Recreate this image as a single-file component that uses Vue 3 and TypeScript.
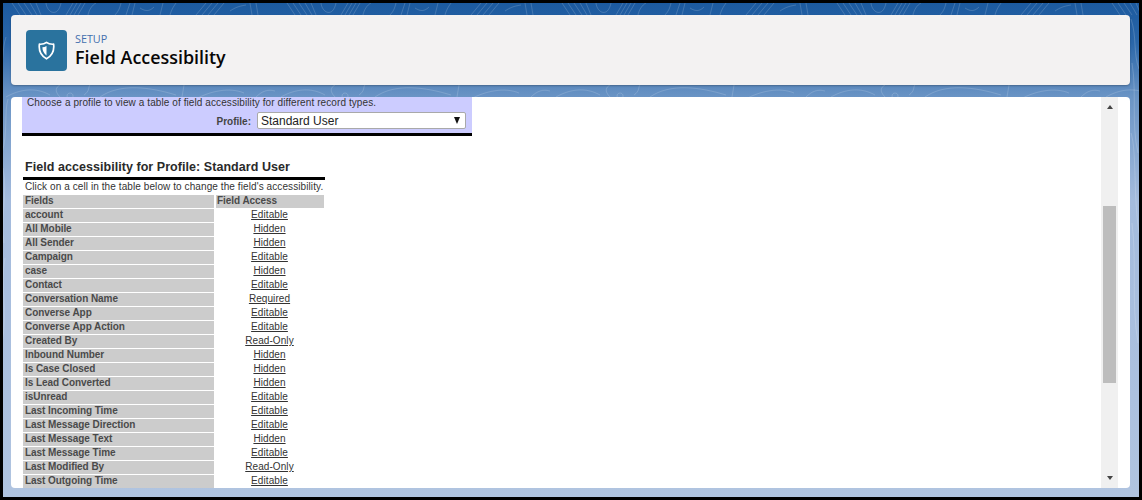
<script setup lang="ts">
type Row = { name: string; access: string };
const rows: Row[] = [
  { name: "account", access: "Editable" },
  { name: "All Mobile", access: "Hidden" },
  { name: "All Sender", access: "Hidden" },
  { name: "Campaign", access: "Editable" },
  { name: "case", access: "Hidden" },
  { name: "Contact", access: "Editable" },
  { name: "Conversation Name", access: "Required" },
  { name: "Converse App", access: "Editable" },
  { name: "Converse App Action", access: "Editable" },
  { name: "Created By", access: "Read-Only" },
  { name: "Inbound Number", access: "Hidden" },
  { name: "Is Case Closed", access: "Hidden" },
  { name: "Is Lead Converted", access: "Hidden" },
  { name: "isUnread", access: "Editable" },
  { name: "Last Incoming Time", access: "Editable" },
  { name: "Last Message Direction", access: "Editable" },
  { name: "Last Message Text", access: "Hidden" },
  { name: "Last Message Time", access: "Editable" },
  { name: "Last Modified By", access: "Read-Only" },
  { name: "Last Outgoing Time", access: "Editable" },
];
</script>

<template>
  <div class="frame">
    <div class="desk">
      <svg class="topo" width="1136" height="494" aria-hidden="true">
        <defs>
          <pattern id="topo-lines" x="-3" y="0" width="275" height="494" patternUnits="userSpaceOnUse">
            <g fill="none" stroke="#ffffff" stroke-opacity="0.2" stroke-width="0.8">
              <path d="M12 0L20 12M18 0L26 12M24 0L32 12M30 0L37 12M36 0L41 12" />
              <path d="M46 0C47 10 58 15 61 0M66 12L73 0M70 12L77 0M74 12L81 0M78 12L85 0M88 12C89 7 92 2 96 0" />
              <path d="M115 12C119 8 120 4 121 0M126 12L130 0M132 12L135 0M140 5C146 9 150 8 154 4M160 12L163 0M170 12C171 8 173 4 176 0" />
              <path d="M196 12L206 0M202 12L212 0M208 12L218 0M214 12L224 0M230 8C236 4 240 3 246 2M252 12L250 0M258 12L256 0" />
              <path d="M6 94C20 86 36 84 50 92M60 94C54 88 56 84 60 82M70 90a3 3 0 1 0 .1 0M84 92C90 88 88 84 90 82M100 94C120 80 150 84 176 92M182 94L184 82M196 96C210 88 230 84 244 90M256 94C262 88 268 86 275 88" />
              <path d="M0 68C4 58 2 46 6 34M2 150C8 130 4 110 8 96M4 240C0 215 8 190 3 165M2 340C8 310 0 280 5 255" />
            </g>
          </pattern>
        </defs>
        <rect width="1136" height="494" fill="url(#topo-lines)" />
        <g fill="none" stroke="#ffffff" stroke-opacity="0.22" stroke-width="0.8">
          <path d="M1128 16C1134 34 1130 50 1136 66M1129 60C1134 90 1128 120 1135 150M1128 130C1134 150 1130 190 1136 230M1129 220C1134 260 1128 300 1135 340" />
        </g>
      </svg>

      <header class="head">
        <div class="badge">
          <svg width="17" height="19" viewBox="0 0 17 19">
            <path d="M8.5 1.4 C10 2.6 12.6 3.4 15.6 3.2 C16.4 9.4 14 14.8 8.5 17.8 C3 14.8 .6 9.4 1.4 3.2 C4.4 3.4 7 2.6 8.5 1.4 Z" fill="none" stroke="#fff" stroke-width="1.7" stroke-linejoin="round" />
            <path d="M8.5 5 C7.2 5.8 5.8 6.2 4.4 6.2 C4.4 9.6 5.8 12.4 8.5 14.4 Z" fill="#fff" />
          </svg>
        </div>
        <div class="titles">
          <div class="eyebrow">SETUP</div>
          <h1 class="title">Field Accessibility</h1>
        </div>
      </header>

      <main class="card">
        <div class="content">
          <section class="chooser">
            <p class="hint">Choose a profile to view a table of field accessibility for different record types.</p>
            <div class="pick">
              <span class="pick-label">Profile:</span>
              <div class="select">
                <span>Standard User</span>
                <span class="caret"></span>
              </div>
            </div>
          </section>

          <section class="result">
            <h2 class="result-title">Field accessibility for Profile: Standard User</h2>
            <p class="result-hint">Click on a cell in the table below to change the field's accessibility.</p>
            <div class="grid">
              <div class="cell th">Fields</div>
              <div class="cell th second">Field Access</div>
              <template v-for="r in rows" :key="r.name">
                <div class="cell th">{{ r.name }}</div>
                <div class="cell access"><a>{{ r.access }}</a></div>
              </template>
            </div>
          </section>
        </div>

        <div class="scrollbar">
          <span class="arrow up"></span>
          <div class="track"><div class="thumb"></div></div>
          <span class="arrow down"></span>
        </div>
      </main>
    </div>
  </div>
</template>

<style>
html, body { margin: 0; background: #000; }
</style>

<style scoped>
.frame {
  width: 1142px;
  height: 500px;
  box-sizing: border-box;
  padding: 3px;
  background: #000;
  font-family: "Liberation Sans", Arial, sans-serif;
}
.desk {
  position: relative;
  height: 494px;
  box-sizing: border-box;
  padding: 12px 9px 9px 8px;
  display: flex;
  flex-direction: column;
  gap: 12px;
  overflow: hidden;
  background: linear-gradient(180deg, #1c5a9f 0%, #2a66a8 8%, #6a94c5 19%, #a4bbdd 40%, #b0c4e0 100%);
}
.topo { position: absolute; inset: 0; }
.head {
  position: relative;
  height: 70px;
  flex: none;
  box-sizing: border-box;
  padding: 15px;
  display: flex;
  align-items: center;
  gap: 8px;
  background: #f3f2f2;
  border-radius: 4px;
  box-shadow: 0 1px 2px rgba(0, 0, 0, 0.25);
}
.badge {
  width: 41px;
  height: 41px;
  border-radius: 4px;
  background: #2a739e;
  display: flex;
  align-items: center;
  justify-content: center;
}
.titles { display: flex; flex-direction: column; padding-top: 1px; }
.eyebrow {
  font-family: "Open Sans", sans-serif;
  font-size: 10.8px;
  line-height: 14px;
  color: #4470ae;
}
.title {
  margin: -1px 0 0;
  font-family: "Open Sans", sans-serif;
  font-size: 17.9px;
  line-height: 24px;
  font-weight: 600;
  color: #080707;
}
.card {
  position: relative;
  flex: 1;
  min-height: 0;
  display: flex;
  justify-content: space-between;
  background: #fff;
  border-radius: 4px;
  overflow: hidden;
  padding-right: 12px;
}
.content { padding-left: 11px; overflow: hidden; }
.chooser {
  width: 450px;
  height: 36px;
  background: #ccccff;
  border-bottom: 3px solid #000;
}
.hint {
  margin: 0 0 0 5px;
  font-size: 10px;
  line-height: 11px;
  letter-spacing: 0.09px;
  color: #333;
}
.pick {
  margin-top: 4px;
  display: flex;
  align-items: center;
  justify-content: flex-end;
  padding-right: 6px;
  gap: 6px;
}
.pick-label { font-size: 10px; font-weight: bold; color: #444; padding-top: 2px; }
.select {
  width: 209px;
  height: 17px;
  box-sizing: border-box;
  border: 1px solid #a9a9a9;
  border-radius: 2px;
  background: #fff;
  display: flex;
  align-items: center;
  justify-content: space-between;
  padding: 0 5px 0 3px;
  font-size: 12px;
  color: #222;
}
.caret {
  width: 0;
  height: 0;
  border-left: 3.5px solid transparent;
  border-right: 3.5px solid transparent;
  border-top: 7px solid #111;
}
.result { margin: 25px 0 0 1px; width: 302px; }
.result-title {
  margin: 0;
  padding: 0 0 3px 2px;
  font-size: 12.5px;
  line-height: 13px;
  font-weight: bold;
  letter-spacing: 0.05px;
  color: #2a2a2a;
  border-bottom: 3px solid #000;
}
.result-hint {
  margin: 1px 0 2px 2px;
  font-size: 10px;
  line-height: 12px;
  letter-spacing: 0.09px;
  color: #333;
  white-space: nowrap;
}
.grid {
  display: grid;
  grid-template-columns: 191px 108px;
  column-gap: 2px;
  row-gap: 1px;
  grid-auto-rows: 13px;
}
.cell {
  font-size: 10px;
  line-height: 12px;
  white-space: nowrap;
}
.th {
  background: #cccccc;
  padding-left: 2px;
  font-weight: bold;
  letter-spacing: -0.06px;
  color: #4a4a4a;
}
.th.second { padding-left: 1px; }
.access { text-align: center; color: #333; letter-spacing: 0.08px; padding-right: 1px; }
.access a { text-decoration: underline; }
.scrollbar {
  width: 17px;
  flex: none;
  background: #f0f0f0;
  display: flex;
  flex-direction: column;
  align-items: center;
}
.arrow { width: 0; height: 0; flex: none; border-left: 3.5px solid transparent; border-right: 3.5px solid transparent; }
.arrow.up { border-bottom: 4px solid #444; margin: 8px 0 7px; }
.arrow.down { border-top: 4px solid #444; margin: 7px 0 8px; }
.track { flex: 1; width: 13px; padding-top: 90px; box-sizing: border-box; }
.thumb { height: 177px; background: #bdbdbd; }
</style>
